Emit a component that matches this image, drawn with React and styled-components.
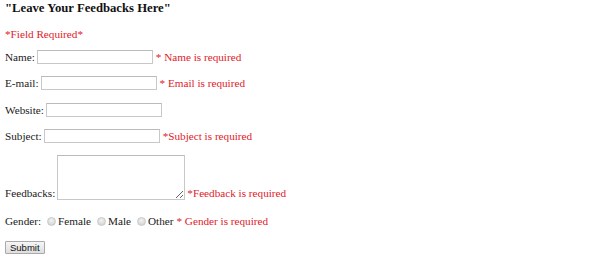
import React from "react";
import styled, { createGlobalStyle } from "styled-components";

const Global = createGlobalStyle`
  body {
    margin: 0;
    padding: 1px 5px 0;
    background: #fff;
    font-family: "Liberation Serif", "Times New Roman", serif;
    font-size: 11.2px;
    color: #1a1a1a;
  }
`;

const Heading = styled.h3`
  margin: 0;
  font-size: 12.7px;
  line-height: 14px;
  font-weight: bold;
  color: #111;
`;

const Required = styled.p`
  margin: 11.5px 0 0;
  line-height: 14px;
  color: #e0202a;
`;

const Row = styled.div`
  display: flex;
  align-items: ${(p) => (p.$bottom ? "flex-end" : "center")};
  margin-top: ${(p) => p.$gap ?? 12}px;
  min-height: 14px;
  line-height: 14px;
  white-space: nowrap;
`;

const Error = styled.span`
  color: #e0202a;
  margin-left: ${(p) => p.$ml ?? 3}px;
`;

const Label = styled.span`
  margin-right: ${(p) => p.$mr ?? 0}px;
`;

const TextInput = styled.input`
  box-sizing: border-box;
  width: 116px;
  height: 14px;
  margin: 0 0 0 2px;
  padding: 0 2px;
  border: 1px solid #c8c8c8;
  border-top-color: #bababa;
  background: #fff;
  font: inherit;
  outline: none;
`;

const Area = styled.textarea`
  box-sizing: border-box;
  width: 128px;
  height: 45px;
  margin: 0 0 0 2px;
  padding: 1px;
  border: 1px solid #c8c8c8;
  border-top-color: #bababa;
  resize: both;
  font: inherit;
  outline: none;
`;

const Radio = styled.input.attrs({ type: "radio" })`
  appearance: none;
  box-sizing: border-box;
  flex: none;
  width: 9px;
  height: 9px;
  margin: 0 2px 0 ${(p) => p.$ml ?? 6}px;
  border-radius: 50%;
  border: 1px solid #c9c9c9;
  background: radial-gradient(circle at 50% 35%, #f2f2f2 0%, #d8d8d8 70%, #cdcdcd 100%);
`;

const Button = styled.button`
  box-sizing: border-box;
  height: 13px;
  padding: 0 4px;
  margin: 0;
  border: 1px solid #a9a9a9;
  border-radius: 1px;
  background: linear-gradient(#f6f6f6, #dedede);
  font-family: "Liberation Sans", Arial, sans-serif;
  font-size: 9.5px;
  line-height: 11px;
  color: #111;
`;

export default function App() {
  return (
    <>
      <Global />
      <form onSubmit={(e) => e.preventDefault()}>
        <Heading>"Leave Your Feedbacks Here"</Heading>
        <Required>*Field Required*</Required>
        <Row $gap={9.5}>
          <Label>Name:</Label>
          <TextInput type="text" />
          <Error>* Name is required</Error>
        </Row>
        <Row $gap={12.3}>
          <Label>E-mail:</Label>
          <TextInput type="text" />
          <Error>* Email is required</Error>
        </Row>
        <Row $gap={12.3}>
          <Label>Website:</Label>
          <TextInput type="text" />
        </Row>
        <Row $gap={12.3}>
          <Label>Subject:</Label>
          <TextInput type="text" />
          <Error>*Subject is required</Error>
        </Row>
        <Row $gap={12.3} $bottom>
          <Label>Feedbacks:</Label>
          <Area />
          <Error $ml={2}>*Feedback is required</Error>
        </Row>
        <Row $gap={14}>
          <Label $mr={6}>Gender:</Label>
          <Radio name="g" $ml={0} />
          <Label>Female</Label>
          <Radio name="g" />
          <Label>Male</Label>
          <Radio name="g" />
          <Label>Other</Label>
          <Error>* Gender is required</Error>
        </Row>
        <Row $gap={12}>
          <Button type="submit">Submit</Button>
        </Row>
      </form>
    </>
  );
}
